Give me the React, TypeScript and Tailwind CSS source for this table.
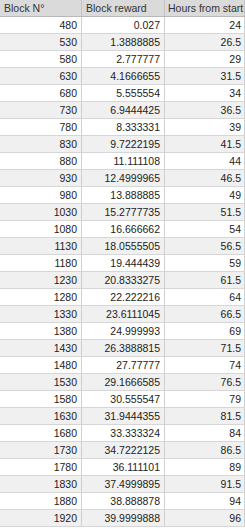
const rows: [string, string, string][] = [
  ["480", "0.027", "24"],
  ["530", "1.3888885", "26.5"],
  ["580", "2.777777", "29"],
  ["630", "4.1666655", "31.5"],
  ["680", "5.555554", "34"],
  ["730", "6.9444425", "36.5"],
  ["780", "8.333331", "39"],
  ["830", "9.7222195", "41.5"],
  ["880", "11.111108", "44"],
  ["930", "12.4999965", "46.5"],
  ["980", "13.888885", "49"],
  ["1030", "15.2777735", "51.5"],
  ["1080", "16.666662", "54"],
  ["1130", "18.0555505", "56.5"],
  ["1180", "19.444439", "59"],
  ["1230", "20.8333275", "61.5"],
  ["1280", "22.222216", "64"],
  ["1330", "23.6111045", "66.5"],
  ["1380", "24.999993", "69"],
  ["1430", "26.3888815", "71.5"],
  ["1480", "27.77777", "74"],
  ["1530", "29.1666585", "76.5"],
  ["1580", "30.555547", "79"],
  ["1630", "31.9444355", "81.5"],
  ["1680", "33.333324", "84"],
  ["1730", "34.7222125", "86.5"],
  ["1780", "36.111101", "89"],
  ["1830", "37.4999895", "91.5"],
  ["1880", "38.888878", "94"],
  ["1920", "39.9999888", "96"],
];

const cols = "grid grid-cols-[82px_83px_80px]";

export default function App() {
  return (
    <div className="w-[245px] bg-white font-['Liberation_Sans',Arial,sans-serif] text-[10.5px] leading-none text-[#222]">
      <div className={`${cols} h-[17px] border-b border-[#b8b8b8] bg-[#dadada] text-[#333]`}>
        <div className="flex items-center border-r border-[#c4c4c4] pl-[4px]">Block N°</div>
        <div className="flex items-center border-r border-[#c4c4c4] pl-[4px]">Block reward</div>
        <div className="flex items-center border-r border-[#c4c4c4] pl-[3px] whitespace-nowrap">
          Hours from start
        </div>
      </div>
      {rows.map((r, i) => (
        <div
          key={r[0]}
          className={`${cols} h-[17px] border-b border-[#d6d6d6] ${i % 2 === 1 ? "bg-[#f0f0f0]" : "bg-white"}`}
        >
          <div className="flex items-center justify-end border-r border-[#d0d0d0] pr-[4px]">{r[0]}</div>
          <div className="flex items-center justify-end border-r border-[#d0d0d0] pr-[4px]">{r[1]}</div>
          <div className="flex items-center justify-end border-r border-[#d0d0d0] pr-[3px]">{r[2]}</div>
        </div>
      ))}
    </div>
  );
}
